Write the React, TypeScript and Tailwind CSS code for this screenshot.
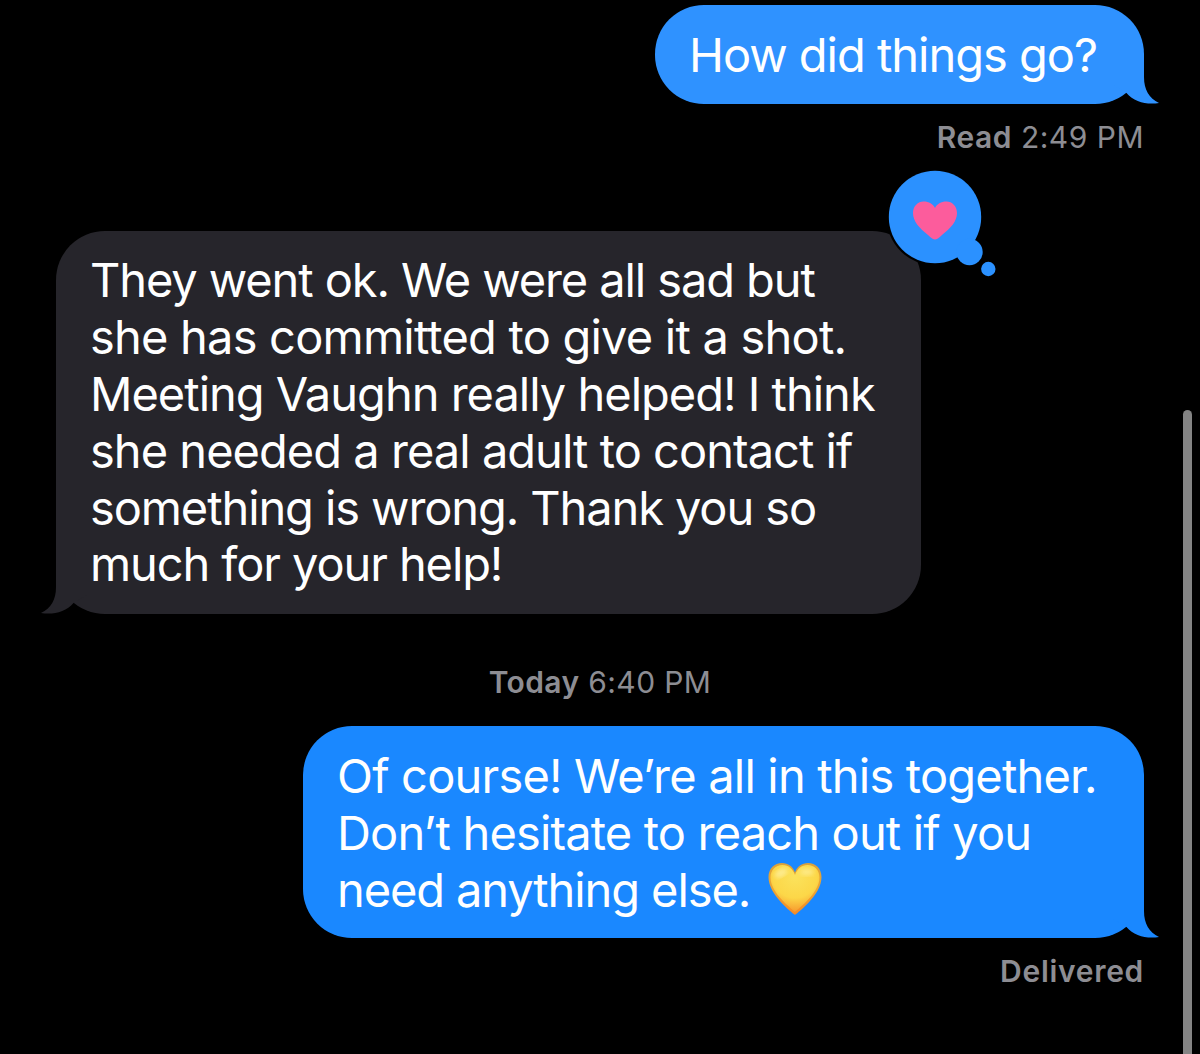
import clsx from 'clsx';

type Line = { text: string; tracking: string };

const received: Line[] = [
  { text: 'They went ok. We were all sad but', tracking: 'tracking-[-1.1px]' },
  { text: 'she has committed to give it a shot.', tracking: 'tracking-[-0.79px]' },
  { text: 'Meeting Vaughn really helped! I think', tracking: 'tracking-[-1px]' },
  { text: 'she needed a real adult to contact if', tracking: 'tracking-[-0.97px]' },
  { text: 'something is wrong. Thank you so', tracking: 'tracking-[-1.1px]' },
  { text: 'much for your help!', tracking: 'tracking-[-1.1px]' },
];

const reply: Line[] = [
  { text: 'Of course! We’re all in this together.', tracking: 'tracking-[-0.81px]' },
  { text: 'Don’t hesitate to reach out if you', tracking: 'tracking-[-0.84px]' },
  { text: 'need anything else.', tracking: 'tracking-[-1.1px]' },
];

function Tail({ side, className }: { side: 'left' | 'right'; className: string }) {
  return (
    <svg
      viewBox="0 0 48 50"
      className={clsx(
        'absolute bottom-0 h-[50px] w-[48px]',
        side === 'right' ? '-right-[16px]' : '-left-[16px] -scale-x-100',
        className
      )}
      fill="currentColor"
    >
      <path d="M0 0H32V23C32 36 37 44 47 49C35 51 22 48 14.500 39L0 30Z" />
    </svg>
  );
}

function TapbackHeart() {
  return (
    <svg viewBox="0 0 112 112" className="absolute -top-[63px] -right-[77px] h-[112px] w-[112px]">
      <circle cx="49" cy="49" r="48.500" fill="#000" />
      <circle cx="49" cy="49" r="46.200" fill="#2b91ff" />
      <circle cx="83.500" cy="84" r="13.200" fill="#2b91ff" />
      <circle cx="102.300" cy="101" r="7.200" fill="#2b91ff" />
      <path
        d="M49 71.500C47.500 71.500 45 70 42 67C33 60 27 53 27 45C27 38 32 33.500 37.500 33.500C43 33.500 47 36 49 40C51 36 55 33.500 60.500 33.500C66 33.500 71 38 71 45C71 53 65 60 56 67C53 70 50.500 71.500 49 71.500Z"
        fill="#fc5c9c"
      />
    </svg>
  );
}

function YellowHeart() {
  return (
    <svg viewBox="0 0 54 54" className="ml-[18px] h-[54px] w-[54px]">
      <defs>
        <linearGradient id="rim" x1="0" y1="0" x2="0" y2="1">
          <stop offset="0" stopColor="#d9a13c" />
          <stop offset="0.5" stopColor="#eea632" />
          <stop offset="1" stopColor="#f58a26" />
        </linearGradient>
        <radialGradient id="fill" cx="0.5" cy="0.25" r="0.75">
          <stop offset="0" stopColor="#fbe25c" />
          <stop offset="0.6" stopColor="#fcd748" />
          <stop offset="1" stopColor="#f79a2e" />
        </radialGradient>
        <filter id="soft">
          <feGaussianBlur stdDeviation="2" />
        </filter>
      </defs>
      <path
        d="M27 53C24 50.500 0.500 33 0.500 15C0.500 6.500 6.500 1 14 1C20 1 25 4.500 27 10.500C29 4.500 34 1 40 1C47.500 1 53.500 6.500 53.500 15C53.500 33 30 50.500 27 53Z"
        fill="url(#rim)"
      />
      <path
        d="M27 50C23 46 2.500 31 2.500 15.500C2.500 8 7.500 3 14.500 3C20.500 3 25 7 27 13C29 7 33.500 3 39.500 3C46.500 3 51.500 8 51.500 15.500C51.500 31 31 46 27 50Z"
        fill="url(#fill)"
      />
      <ellipse cx="13" cy="11" rx="7" ry="4" fill="#fff3a8" opacity="0.7" filter="url(#soft)" transform="rotate(-30 13 11)" />
      <ellipse cx="39" cy="10" rx="7" ry="3.500" fill="#fff3a8" opacity="0.6" filter="url(#soft)" />
    </svg>
  );
}

function Lines({ lines }: { lines: Line[] }) {
  return (
    <>
      {lines.map((line) => (
        <span key={line.text} className={clsx('h-[56.9px] whitespace-nowrap', line.tracking)}>
          {line.text}
        </span>
      ))}
    </>
  );
}

export default function App() {
  return (
    <div className="flex h-[1054px] w-[1200px] justify-between overflow-hidden bg-black font-['Inter',sans-serif] text-[47px] leading-[57px] text-white">
      <main className="flex w-[1144px] flex-col pt-[5px] pl-[56px]">
        <div className="relative flex h-[99px] w-[489px] items-center self-end rounded-[49px] bg-[#2f92ff] pl-[34px]">
          <span className="tracking-[-1.02px] whitespace-nowrap">How did things go?</span>
          <Tail side="right" className="text-[#2f92ff]" />
        </div>
        <p className="mt-[14px] h-[38px] self-end text-[30px] leading-[38px] tracking-[0.5px] whitespace-nowrap text-[#8d8d93]">
          <span className="font-semibold">Read</span> 2:49 PM
        </p>

        <div className="relative mt-[75px] flex h-[383px] w-[865px] flex-col rounded-[49px] bg-[#26252b] pt-[20px] pl-[34px]">
          <Lines lines={received} />
          <Tail side="left" className="text-[#26252b]" />
          <TapbackHeart />
        </div>

        <p className="mt-[49px] -ml-[56px] h-[38px] w-[1200px] text-center text-[30px] leading-[38px] tracking-[0.4px] text-[#8d8d93]">
          <span className="font-semibold">Today</span> 6:40 PM
        </p>

        <div className="relative mt-[25px] flex h-[212px] w-[841px] flex-col self-end rounded-[49px] bg-[#1a88ff] pt-[21px] pl-[34px]">
          <Lines lines={reply.slice(0, 2)} />
          <div className="flex items-center">
            <Lines lines={reply.slice(2)} />
            <YellowHeart />
          </div>
          <Tail side="right" className="text-[#1a88ff]" />
        </div>
        <p className="mt-[14px] self-end text-[30px] leading-[38px] font-semibold tracking-[0.7px] text-[#8d8d93]">Delivered</p>
      </main>
      <div className="mt-[410px] mr-[8px] w-[9px] rounded-t-full bg-[#848484]" />
    </div>
  );
}
